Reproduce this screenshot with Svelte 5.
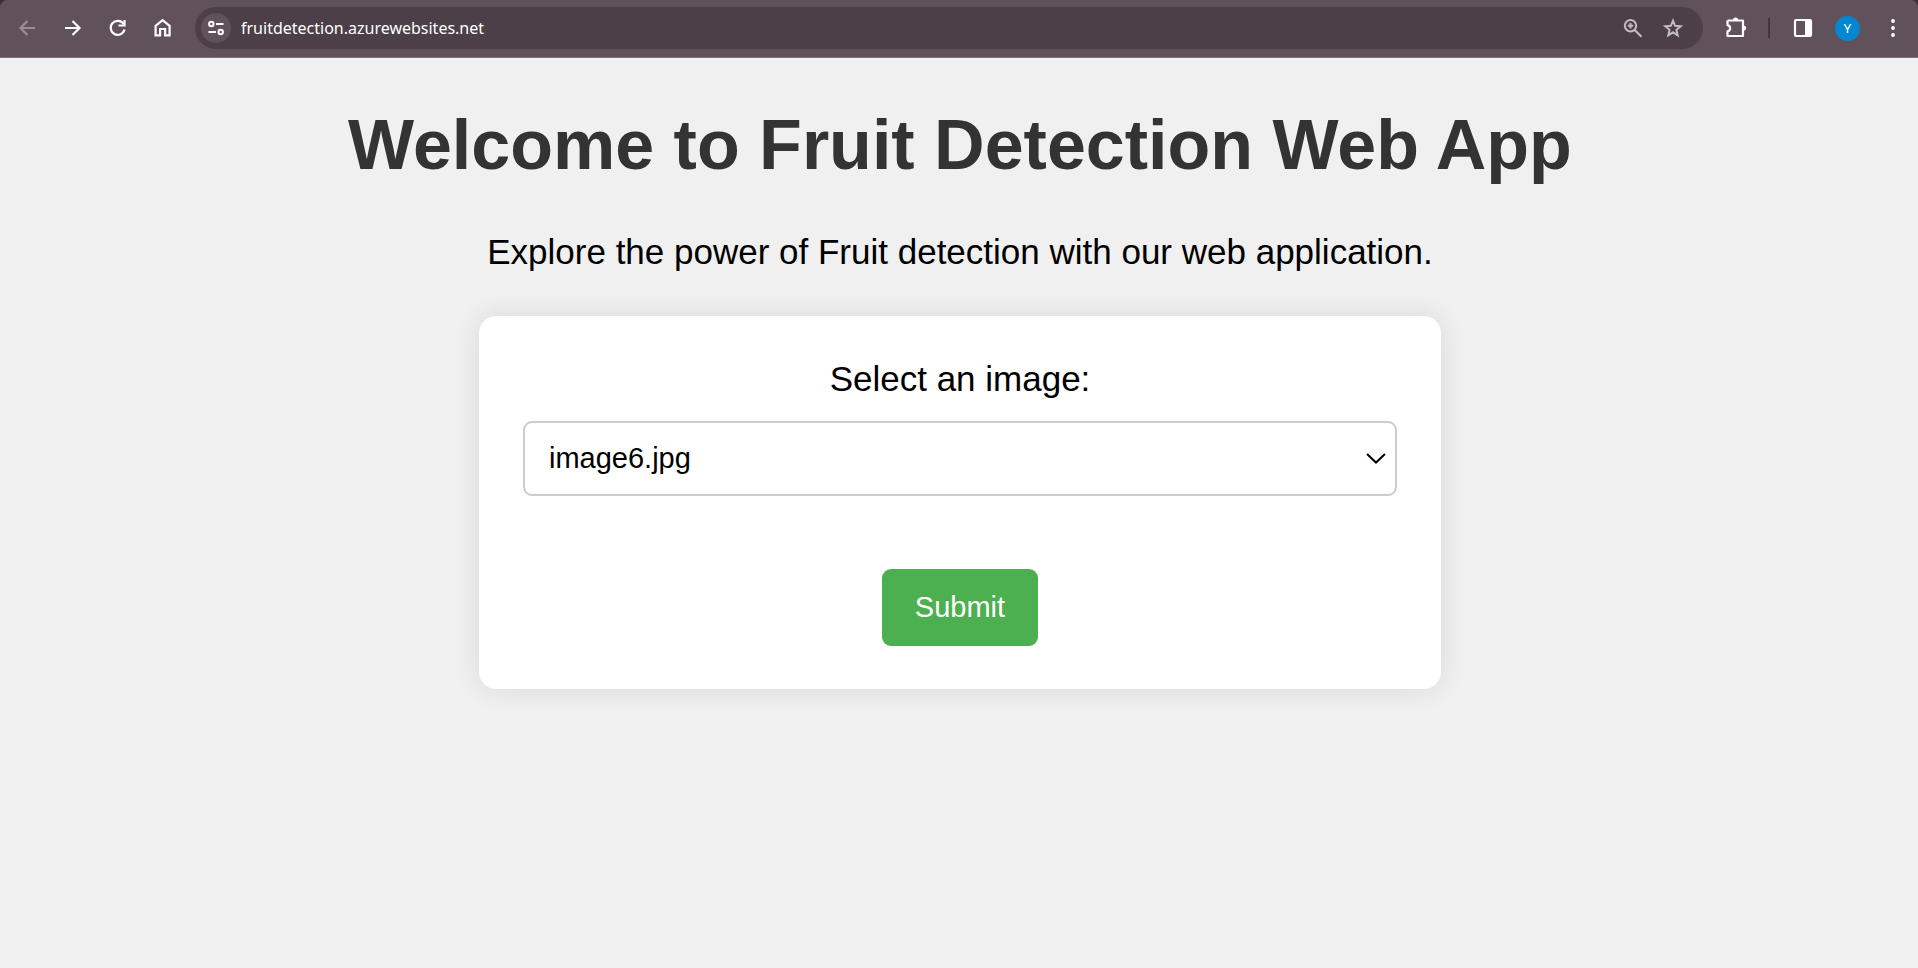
<script>
  const images = ['image1.jpg', 'image2.jpg', 'image3.jpg', 'image4.jpg', 'image5.jpg', 'image6.jpg'];
  let selected = $state('image6.jpg');
  let address = $state('fruitdetection.azurewebsites.net');
</script>

<div class="window">
  <header class="toolbar">
    <nav class="group" aria-label="Navigation">
      <button class="tool" aria-label="Back" disabled>
        <svg viewBox="0 0 24 24"><path d="M19 12H5.500M11.500 5l-7 7 7 7" /></svg>
      </button>
      <button class="tool" aria-label="Forward">
        <svg viewBox="0 0 24 24"><path d="M4 12h14.500M11.500 5l7 7-7 7" /></svg>
      </button>
      <button class="tool" aria-label="Reload">
        <svg viewBox="0 0 24 24"><path d="M17.600 8A7 7 0 1 0 18.500 13.500" /><path d="M18.500 4v5.500h-6" /></svg>
      </button>
      <button class="tool" aria-label="Home">
        <svg viewBox="0 0 24 24"><path d="M4.600 9.800 11.600 4.200l7 5.600V19.300h-4.500v-6.300H9.100v6.300H4.600z" /></svg>
      </button>
    </nav>

    <div class="omnibox">
      <button class="site" aria-label="Site information">
        <svg viewBox="0 0 24 24">
          <circle cx="7.300" cy="8" r="2.200" /><path d="M12 8h7.500M4.500 16H12" /><circle cx="16.700" cy="16" r="2.200" />
        </svg>
      </button>
      <input type="text" aria-label="Address" bind:value={address} />
      <button class="action" aria-label="Zoom">
        <svg viewBox="0 0 24 24"><circle cx="9.500" cy="9.800" r="5.700" /><path d="m13.700 14 6.800 6.800M9.500 7v5.600M6.700 9.800h5.600" /></svg>
      </button>
      <button class="action" aria-label="Bookmark">
        <svg viewBox="0 0 24 24"><path d="m12 4.700 2.100 5.100 5.600.4-4.300 3.600 1.300 5.500-4.700-3-4.700 3 1.300-5.500-4.300-3.600 5.600-.4z" /></svg>
      </button>
    </div>

    <div class="group">
      <button class="tool" aria-label="Extensions">
        <svg viewBox="0 0 24 24">
          <path d="M3.500 4.500H19v6.300M19 10v10H3.500v-4.600a3.200 3.200 0 0 0 0-6.300V4.500" stroke-linejoin="round" />
          <path class="solid" d="M9 4a2.600 2.600 0 0 1 5.200 0zM19.500 9.500a2.600 2.600 0 0 1 0 5.200z" />
        </svg>
      </button>
      <span class="divider"></span>
      <button class="tool" aria-label="Side panel">
        <svg viewBox="0 0 24 24"><rect x="4" y="4" width="16" height="16" rx="1" /><path class="solid" d="M14 4h6v16h-6z" /></svg>
      </button>
      <button class="tool" aria-label="Profile"><span class="avatar">Y</span></button>
      <button class="tool" aria-label="Menu">
        <svg viewBox="0 0 24 24"><g class="solid"><circle cx="12" cy="5" r="1.900" /><circle cx="12" cy="12" r="1.900" /><circle cx="12" cy="19" r="1.900" /></g></svg>
      </button>
    </div>
  </header>

  <main>
    <h1>Welcome to Fruit Detection Web App</h1>
    <p>Explore the power of Fruit detection with our web application.</p>
    <form onsubmit={(e) => e.preventDefault()}>
      <label for="image">Select an image:</label>
      <div class="picker">
        <select id="image" bind:value={selected}>
          {#each images as name}
            <option value={name}>{name}</option>
          {/each}
        </select>
        <svg viewBox="0 0 20 12" aria-hidden="true"><path d="m1 1 9 8.500L19 1" /></svg>
      </div>
      <button class="submit" type="submit">Submit</button>
    </form>
  </main>
</div>

<style>
  :global(body) {
    margin: 0;
    background: #f0f0f0;
  }

  .window {
    min-height: 100vh;
    font-family: 'Liberation Sans', Arial, sans-serif;
    background: #f0f0f0;
    color: #000;
  }

  button {
    border: 0;
    padding: 0;
    background: none;
    font-family: inherit;
    cursor: pointer;
  }

  svg {
    display: block;
    fill: none;
    stroke: currentColor;
    stroke-width: 2;
  }

  .solid {
    fill: currentColor;
    stroke: none;
  }

  .toolbar {
    display: flex;
    align-items: center;
    gap: 10px;
    padding: 7px 3px 8px 5px;
    border-bottom: 1px solid #836f79;
    background:
      radial-gradient(circle at 100% 100%, transparent 9px, #3b2e36 10px) 0 0 / 9px 9px no-repeat,
      radial-gradient(circle at 0 100%, transparent 9px, #3b2e36 10px) 100% 0 / 9px 9px no-repeat,
      #61515b;
    color: #fff;
  }

  .group {
    display: flex;
    align-items: center;
  }

  .tool,
  .action {
    display: grid;
    place-items: center;
    width: 45px;
    height: 42px;
    color: #fff;
  }

  .tool:disabled {
    color: #9a8d95;
  }

  .tool svg,
  .action svg,
  .site svg {
    width: 24px;
    height: 24px;
  }

  .tool svg {
    stroke-width: 2.2;
  }

  .omnibox {
    flex: 1;
    display: flex;
    align-items: center;
    box-sizing: border-box;
    height: 42px;
    padding: 0 10px 0 6px;
    border-radius: 21px;
    background: #4c3f48;
  }

  .site {
    display: grid;
    place-items: center;
    width: 30px;
    height: 30px;
    border-radius: 50%;
    background: #61515b;
    color: #fff;
  }

  .omnibox input {
    flex: 1;
    min-width: 0;
    padding: 0 10px;
    border: 0;
    outline: 0;
    background: none;
    color: #fff;
    font: 16px/24px 'Noto Sans', 'Open Sans', sans-serif;
  }

  .action {
    width: 40px;
    color: #c3bdc1;
  }

  .divider {
    width: 2px;
    height: 20px;
    margin: 0 10px;
    background: #43353e;
  }

  .avatar {
    width: 25px;
    border-radius: 50%;
    background: #0288d1;
    font: 13px/25px Roboto, sans-serif;
    text-align: center;
  }

  main {
    display: flex;
    flex-direction: column;
    align-items: center;
    padding: 47px 18px 47px 20px;
    text-align: center;
  }

  h1 {
    margin: 0 0 47px;
    color: #333;
    font-size: 70px;
    line-height: 80px;
  }

  p {
    margin: 0 0 44px;
    font-size: 35px;
    line-height: 40px;
  }

  form {
    display: flex;
    flex-direction: column;
    align-items: center;
    box-sizing: border-box;
    width: 100%;
    max-width: 962px;
    padding: 43px 44px;
    border-radius: 17px;
    background: #fff;
    box-shadow: 0 0 26px rgba(0, 0, 0, 0.1);
  }

  label {
    margin-bottom: 22px;
    font-size: 35px;
    line-height: 40px;
  }

  .picker {
    display: grid;
    align-items: center;
    width: 100%;
    margin-bottom: 73px;
  }

  .picker > * {
    grid-area: 1 / 1;
  }

  select {
    appearance: none;
    width: 100%;
    padding: 18px 24px;
    border: 2px solid #ccc;
    border-radius: 9px;
    background: #fff;
    color: #000;
    font-family: inherit;
    font-size: 29px;
    line-height: 35px;
  }

  .picker svg {
    justify-self: end;
    width: 20px;
    height: 12px;
    margin-right: 11px;
    pointer-events: none;
  }

  .submit {
    padding: 22px 33px;
    border-radius: 9px;
    background: #4caf50;
    color: #fff;
    font-size: 29px;
    line-height: 33px;
  }
</style>
